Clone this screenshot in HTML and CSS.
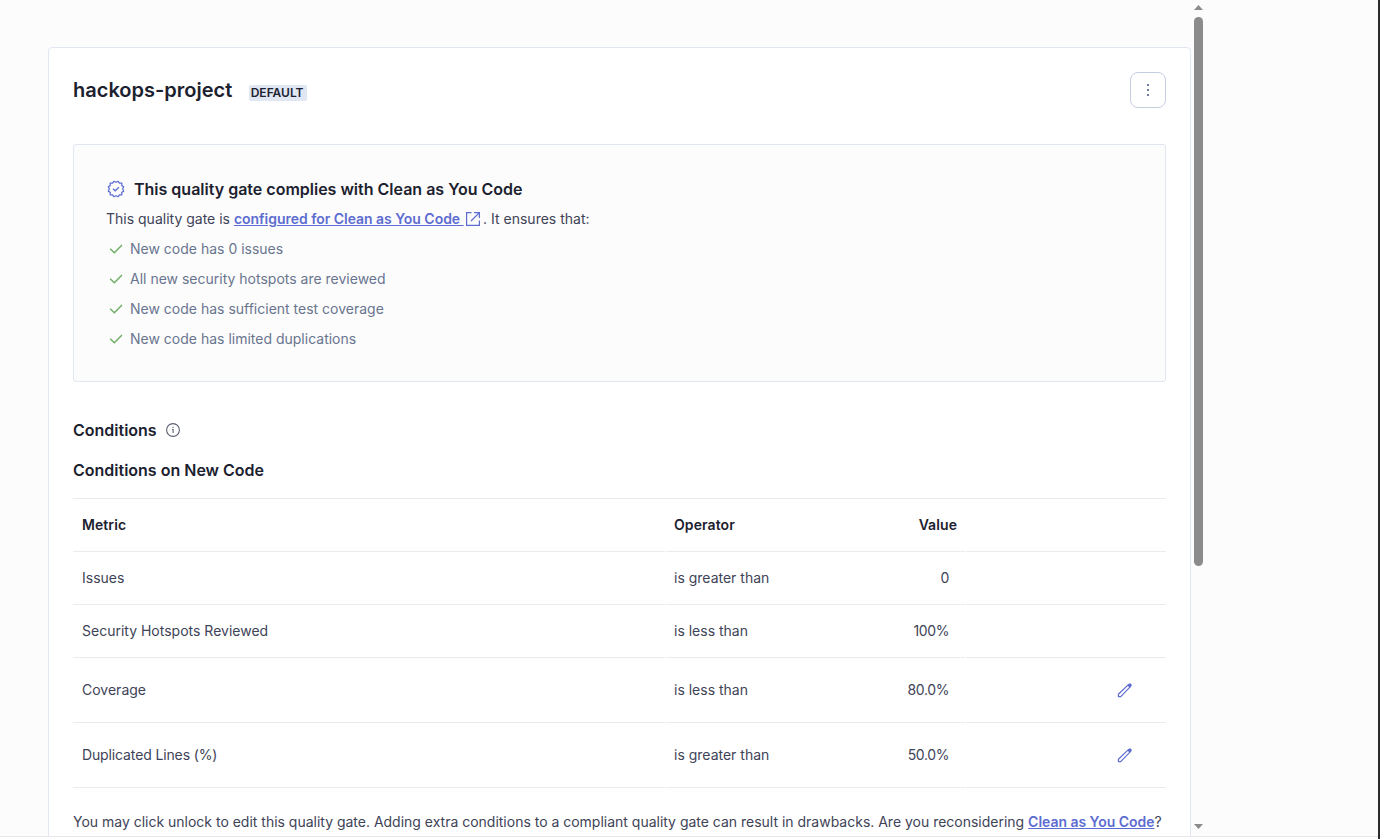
FILE: index.html
```html
<!DOCTYPE html>
<html lang="en">
<head>
<meta charset="utf-8">
<title>Quality Gates</title>
<link rel="stylesheet" href="styles.css">
</head>
<body>
<svg class="defs" width="0" height="0">
  <symbol id="check" viewBox="0 0 16 16"><path d="M14 4 6.3 11.7 2.2 7.8" fill="none" stroke="currentColor" stroke-width="1.4"/></symbol>
  <symbol id="pencil" viewBox="0 0 16 16"><path d="M1.4 14.6V12.3L11.4 2.6 13.4 4.6 3.7 14.6z" fill="none" stroke="currentColor" stroke-width="1.2" stroke-linejoin="round"/><path d="M10.4 3.4 12.2 1.6h1.6l.8.8v1.6l-1.9 1.8z" fill="currentColor"/></symbol>
</svg>
<div class="window">
  <main class="content">
    <section class="card">
      <header class="card-head">
        <h1>hackops-project</h1>
        <span class="badge">DEFAULT</span>
        <button class="menu" aria-label="Actions"><svg width="16" height="16" viewBox="0 0 16 16"><path d="M7 2h2v2H7zM7 7h2v2H7zM7 12h2v2H7z" fill="currentColor"/></svg></button>
      </header>
      <div class="notice">
        <h2 class="notice-title">
          <svg width="18" height="18" viewBox="0 0 18 18" fill="none" stroke="currentColor" stroke-width="1.25"><path stroke-linejoin="round" d="M9 2.3 11.2 1.3 12.4 3.2 14.8 3.2 14.8 5.6 16.7 6.8 15.7 9 16.7 11.2 14.8 12.4 14.8 14.8 12.4 14.8 11.2 16.7 9 15.7 6.8 16.7 5.6 14.8 3.2 14.8 3.2 12.4 1.3 11.2 2.3 9 1.3 6.8 3.2 5.6 3.2 3.2 5.6 3.2 6.8 1.3z"/><path d="M6 8.8 8.2 10.8 11.9 7.2"/></svg>
          <span>This quality gate complies with Clean as You Code</span>
        </h2>
        <p class="notice-text">This quality gate is <a href="#">configured for Clean as You Code <svg width="16" height="16" viewBox="0 0 16 16" fill="none" stroke="currentColor" stroke-width="1.25"><path d="M6.5 1.6H1.6v12.8h12.8V9.5M9 1.6h5.4V7M14.4 1.6 6 10"/></svg></a>. It ensures that:</p>
        <ul class="checks">
          <li><svg width="16" height="16"><use href="#check"/></svg>New code has 0 issues</li>
          <li><svg width="16" height="16"><use href="#check"/></svg>All new security hotspots are reviewed</li>
          <li><svg width="16" height="16"><use href="#check"/></svg>New code has sufficient test coverage</li>
          <li><svg width="16" height="16"><use href="#check"/></svg>New code has limited duplications</li>
        </ul>
      </div>
      <h2 class="heading">Conditions
        <svg width="16" height="16" viewBox="0 0 16 16" fill="none" stroke="currentColor" stroke-width="1.1"><circle cx="8" cy="8" r="6.4"/><path d="M7 7.5H8.1V11M8 4.8v1.2"/></svg>
      </h2>
      <h2 class="heading">Conditions on New Code</h2>
      <div class="table">
        <div class="row head"><span>Metric</span><span>Operator<b>Value</b></span><span></span></div>
        <div class="row"><span>Issues</span><span>is greater than<b>0</b></span><span></span></div>
        <div class="row"><span>Security Hotspots Reviewed</span><span>is less than<b>100%</b></span><span></span></div>
        <div class="row tall"><span>Coverage</span><span>is less than<b>80.0%</b></span><span><svg width="16" height="16"><use href="#pencil"/></svg></span></div>
        <div class="row tall"><span class="tight">Duplicated Lines (%)</span><span>is greater than<b>50.0%</b></span><span><svg width="16" height="16"><use href="#pencil"/></svg></span></div>
      </div>
      <p class="foot">You may click unlock to edit this quality gate. Adding extra conditions to a compliant quality gate can result in drawbacks. Are you reconsidering <a href="#">Clean as You Code</a>?</p>
    </section>
  </main>
  <div class="scrollbar">
    <svg width="9" height="5" viewBox="0 0 9 5"><path d="M0 5 4.5 0 9 5z" fill="currentColor"/></svg>
    <div class="thumb"></div>
    <svg class="down" width="9" height="5" viewBox="0 0 9 5"><path d="M0 0 4.5 5 9 0z" fill="currentColor"/></svg>
  </div>
</div>
</body>
</html>
```
FILE: styles.css
```css
* { box-sizing: border-box; }
body {
  margin: 0;
  height: 839px;
  overflow: hidden;
  background: #fff;
  border-right: 2px solid #2b2b2b;
  font: 14px/20px Inter, sans-serif;
  color: #3e4357;
}
h1, h2, p, ul { margin: 0; padding: 0; }
svg { display: block; flex: none; }
.defs { position: absolute; }
.window {
  display: flex;
  height: 837px;
  overflow: hidden;
  background: #fcfcfc;
  border-bottom: 1px solid #e6e6e6;
}
.content { width: 1191px; flex: none; padding: 47px 0 0 48px; }
.card {
  height: 900px;
  padding: 24px;
  background: #fff;
  border: 1px solid #e1e6f3;
  border-radius: 4px;
}
.card-head { display: flex; height: 36px; align-items: center; }
h1 { font-size: 20px; line-height: 28px; font-weight: 600; color: #1c212f; }
.badge {
  margin: 5px 0 0 17px;
  padding: 0 3px 0 1.5px;
  border-radius: 2px;
  background: #e1e6f3;
  color: #1c212f;
  font-size: 12px;
  line-height: 16px;
  font-weight: 600;
}
.menu {
  display: grid;
  place-items: center;
  width: 36px;
  height: 36px;
  margin-left: auto;
  padding: 0;
  border: 1px solid #c5cddf;
  border-radius: 8px;
  background: #fff;
  color: #5d6c96;
}
.menu svg { transform: scaleX(0.9); }
.notice {
  height: 238px;
  margin-top: 36px;
  padding: 32px 32px 0;
  border: 1px solid #e1e6f3;
  border-radius: 3px;
  background: #fcfcfc;
}
.notice-title {
  display: flex;
  align-items: center;
  gap: 9px;
  height: 24px;
  padding-left: 1px;
  font-size: 16px;
  font-weight: 600;
  color: #1c212f;
}
.notice-title svg { color: #5d6cd0; }
.notice-text { margin: 8px 0 0; }
a { color: #5d6cd0; font-weight: 600; text-decoration: underline; letter-spacing: -0.03px; }
a svg { display: inline-block; vertical-align: -3px; margin: 0 2.5px 0 1px; }
.checks { list-style: none; margin-top: 10px; color: #69758f; }
.checks li { display: flex; align-items: center; gap: 6px; height: 20px; margin-bottom: 10px; padding-left: 2px; }
.checks svg { color: #6cad63; }
.heading {
  display: flex;
  align-items: center;
  gap: 8px;
  height: 24px;
  margin-top: 16px;
  font-size: 16px;
  font-weight: 600;
  color: #1c212f;
}
.notice + .heading { margin-top: 36px; }
.heading svg { color: #5b6070; }
.table { margin-top: 16px; border-top: 1px solid #ebebeb; }
.row { display: grid; grid-template-columns: 592px 299px 200px; column-gap: 1px; height: 53px; }
.row > span {
  display: flex;
  align-items: center;
  justify-content: space-between;
  padding: 0 16px 0 8px;
  border-bottom: 1px solid #ebebeb;
}
.row > span:first-child { padding-left: 9px; }
.row > .tight { letter-spacing: -0.13px; }
.row b { font-weight: 400; letter-spacing: -0.4px; }
.row.head, .row.head b { font-weight: 600; letter-spacing: 0.08px; color: #1c212f; }
.row.head > span { padding-right: 8px; }
.row.tall { height: 65px; }
.row > span:last-child { justify-content: flex-end; padding-right: 33px; color: #5d6cd0; }
.foot { margin-top: 24px; white-space: nowrap; letter-spacing: -0.008px; }
.scrollbar {
  display: flex;
  flex-direction: column;
  align-items: center;
  width: 15px;
  padding: 5px 0;
  color: #8b8b8b;
}
.thumb { width: 9px; height: 549px; margin-top: 7px; border-radius: 5px; background: #8b8b8b; }
.down { margin-top: auto; margin-bottom: 2px; }
```
